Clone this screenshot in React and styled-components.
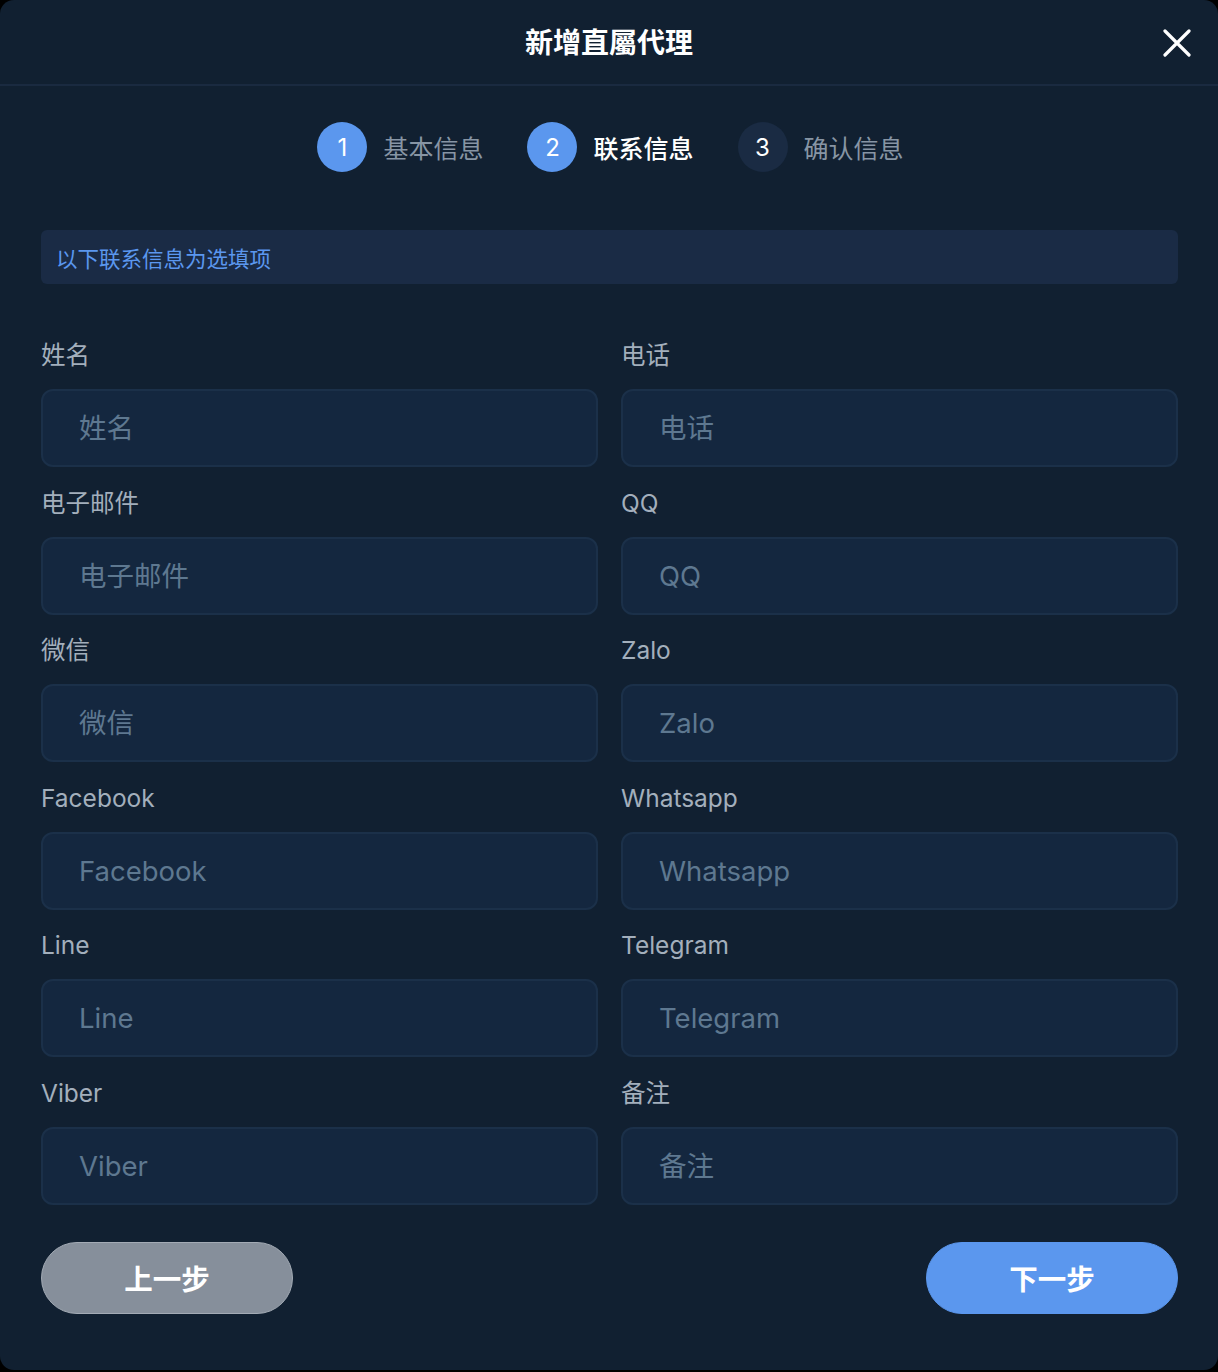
import React from "react";
import styled, { createGlobalStyle } from "styled-components";

const Global = createGlobalStyle`
  html, body { margin: 0; padding: 0; background: #000; }
  body { font-family: Inter, "Noto Sans CJK SC", sans-serif; }
  * { box-sizing: border-box; }
`;

const Modal = styled.div`
  width: 1218px;
  height: 1370px;
  background: #112031;
  border-radius: 14px;
  overflow: hidden;
  display: flex;
  flex-direction: column;
`;

const Header = styled.div`
  height: 86px;
  border-bottom: 2px solid #1a2a40;
  display: flex;
  align-items: center;
  justify-content: center;
  position: relative;
`;

const Title = styled.h1`
  margin: 0;
  font-size: 28px;
  font-weight: 700;
  color: #fff;
  margin-top: -2px;
`;

const Close = styled.button`
  position: absolute;
  right: 24px;
  top: 26px;
  width: 34px;
  height: 34px;
  padding: 0;
  background: none;
  border: none;
  display: flex;
  align-items: center;
  justify-content: center;
`;

const Body = styled.div`
  padding: 36px 40px 0 41px;
  display: flex;
  flex-direction: column;
`;

const Steps = styled.div`
  display: flex;
  justify-content: center;
  gap: 44px;
  padding-left: 2px;
`;

const Step = styled.div`
  display: flex;
  align-items: center;
  gap: 16px;
`;

const Circle = styled.div`
  width: 50px;
  height: 50px;
  border-radius: 50%;
  background: ${(p) => (p.$active ? "#5b97ee" : "#1a2b43")};
  color: #fff;
  font-size: 24px;
  display: flex;
  align-items: center;
  justify-content: center;
`;

const StepLabel = styled.span`
  font-size: 25px;
  color: ${(p) => (p.$current ? "#ffffff" : "#8795a4")};
  font-weight: ${(p) => (p.$current ? 500 : 400)};
`;

const Notice = styled.div`
  margin-top: 58px;
  height: 54px;
  background: #1a2b45;
  border-radius: 6px;
  padding: 0 15px;
  display: flex;
  align-items: center;
  color: #5b97ee;
  font-size: 21.5px;
`;

const Grid = styled.div`
  margin-top: 55px;
  display: grid;
  grid-template-columns: 557px 557px;
  column-gap: 23px;
  row-gap: 19.5px;
`;

const Field = styled.div`
  display: flex;
  flex-direction: column;
`;

const Label = styled.label`
  font-size: 24.5px;
  line-height: 33px;
  color: #a3afbc;
  margin-bottom: 17px;
`;

const Input = styled.input`
  height: 78px;
  background: #14273f;
  border: 2px solid #1b3049;
  border-radius: 12px;
  padding: 0 36px;
  font-family: Inter, "Noto Sans CJK SC", sans-serif;
  font-size: 27.5px;
  color: #fff;
  outline: none;
  &::placeholder { color: #5e7890; }
`;

const Footer = styled.div`
  margin-top: 37px;
  display: flex;
  justify-content: space-between;
`;

const Btn = styled.button`
  width: 252px;
  height: 72px;
  border-radius: 36px;
  border: 1.5px solid ${(p) => (p.$primary ? "#5b97ee" : "#a3abb5")};
  background: ${(p) => (p.$primary ? "#5b97ee" : "#868f9b")};
  color: #fff;
  font-family: Inter, "Noto Sans CJK SC", sans-serif;
  font-size: 28.5px;
  font-weight: 700;
`;

const fields = [
  ["姓名", "电话"],
  ["电子邮件", "QQ"],
  ["微信", "Zalo"],
  ["Facebook", "Whatsapp"],
  ["Line", "Telegram"],
  ["Viber", "备注"],
].flat();

export default function App() {
  return (
    <>
      <Global />
      <Modal>
        <Header>
          <Title>新增直屬代理</Title>
          <Close aria-label="close">
            <svg width="28" height="28" viewBox="0 0 28 28">
              <path d="M2 2 L26 26 M26 2 L2 26" stroke="#fff" strokeWidth="3.2" strokeLinecap="round" />
            </svg>
          </Close>
        </Header>
        <Body>
          <Steps>
            <Step>
              <Circle $active>1</Circle>
              <StepLabel>基本信息</StepLabel>
            </Step>
            <Step>
              <Circle $active>2</Circle>
              <StepLabel $current>联系信息</StepLabel>
            </Step>
            <Step>
              <Circle>3</Circle>
              <StepLabel>确认信息</StepLabel>
            </Step>
          </Steps>
          <Notice>以下联系信息为选填项</Notice>
          <Grid>
            {fields.map((f) => (
              <Field key={f}>
                <Label>{f}</Label>
                <Input placeholder={f} />
              </Field>
            ))}
          </Grid>
          <Footer>
            <Btn>上一步</Btn>
            <Btn $primary>下一步</Btn>
          </Footer>
        </Body>
      </Modal>
    </>
  );
}
